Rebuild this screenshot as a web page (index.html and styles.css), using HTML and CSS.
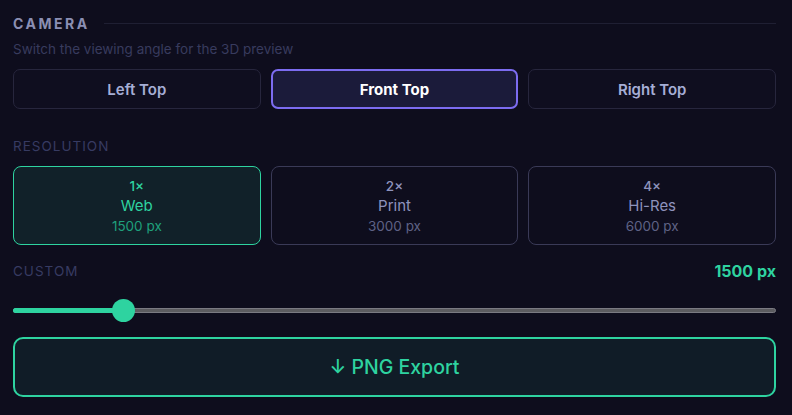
FILE: index.html
```html
<!DOCTYPE html>
<html>
<head>
<meta charset="utf-8">
<link rel="stylesheet" href="styles.css">
</head>
<body>
<div class="panel">
  <div class="section-head">
    <span class="title">CAMERA</span>
    <span class="rule"></span>
  </div>
  <div class="subtitle">Switch the viewing angle for the 3D preview</div>
  <div class="cam-row">
    <button class="cam">Left Top</button>
    <button class="cam active">Front Top</button>
    <button class="cam">Right Top</button>
  </div>

  <div class="label res-label">RESOLUTION</div>
  <div class="res-row">
    <div class="res active">
      <div class="mult">1×</div>
      <div class="name">Web</div>
      <div class="px">1500 px</div>
    </div>
    <div class="res">
      <div class="mult">2×</div>
      <div class="name">Print</div>
      <div class="px">3000 px</div>
    </div>
    <div class="res">
      <div class="mult">4×</div>
      <div class="name">Hi-Res</div>
      <div class="px">6000 px</div>
    </div>
  </div>

  <div class="custom-head">
    <span class="label">CUSTOM</span>
    <span class="value">1500 px</span>
  </div>
  <div class="slider">
    <div class="track">
      <div class="fill" style="width: 14.4%"></div>
      <div class="thumb" style="left: 14.4%"></div>
    </div>
  </div>

  <button class="export">↓ PNG Export</button>
</div>
</body>
</html>
```

FILE: styles.css
```css
* { box-sizing: border-box; }
html, body {
  margin: 0;
  padding: 0;
  background: #0e0d1d;
  font-family: Inter, "Noto Sans", sans-serif;
}
.panel {
  width: 792px;
  height: 415px;
  padding: 12px 16px 0 13px;
  display: flex;
  flex-direction: column;
}
.section-head {
  display: flex;
  align-items: center;
  gap: 14px;
  height: 22px;
}
.title {
  font-size: 14px;
  font-weight: 700;
  letter-spacing: 2.5px;
  color: #8b8fb3;
}
.rule {
  flex: 1;
  height: 1px;
  background: #1f1f33;
}
.subtitle {
  margin-top: 6px;
  font-size: 13.5px;
  color: #383b5e;
  line-height: 18px;
}
.cam-row {
  margin-top: 11px;
  display: grid;
  grid-template-columns: 1fr 1fr 1fr;
  gap: 10px;
}
.cam {
  height: 40px;
  border-radius: 7px;
  border: 1.5px solid #27263d;
  background: #0f0e1f;
  color: #a6aed6;
  font-family: Inter, "Noto Sans", sans-serif;
  font-size: 15px;
  font-weight: 600;
  padding: 0;
}
.cam.active {
  border: 2px solid #7c6cf0;
  background: #1b1b3a;
  color: #ffffff;
  font-weight: 700;
}
.label {
  font-size: 13.5px;
  letter-spacing: 1px;
  color: #373b62;
}
.res-label {
  margin-top: 29px;
  line-height: 16px;
}
.res-row {
  margin-top: 12px;
  display: grid;
  grid-template-columns: 1fr 1fr 1fr;
  gap: 10px;
}
.res {
  height: 79px;
  border-radius: 8px;
  border: 1px solid #3a3a57;
  display: flex;
  flex-direction: column;
  align-items: center;
  justify-content: center;
  padding-top: 2px;
}
.res .mult {
  font-size: 13.5px;
  font-weight: 500;
  color: #8e93bd;
  line-height: 20px;
}
.res .name {
  font-size: 15px;
  color: #8e93bd;
  line-height: 20px;
}
.res .px {
  font-size: 13.5px;
  color: #5f6285;
  line-height: 21px;
}
.res.active {
  border-color: #2ed3a0;
  background: #112129;
}
.res.active .mult, .res.active .name { color: #2ed3a0; }
.res.active .px { color: #1fa07c; }
.custom-head {
  margin-top: 18px;
  display: flex;
  justify-content: space-between;
  align-items: center;
  line-height: 16px;
}
.value {
  font-size: 16px;
  font-weight: 700;
  color: #2ed3a0;
}
.slider {
  margin-top: 19px;
  height: 24px;
  display: flex;
  align-items: center;
}
.track {
  position: relative;
  width: 100%;
  height: 5px;
  border-radius: 3px;
  background: #5c5c60;
  border: 1px solid #7a7a82;
}
.fill {
  position: absolute;
  left: -1px;
  top: -1px;
  bottom: -1px;
  background: #2ed3a0;
  border-radius: 3px 0 0 3px;
}
.thumb {
  position: absolute;
  top: 50%;
  width: 23px;
  height: 23px;
  margin-left: -11.5px;
  margin-top: -11.5px;
  border-radius: 50%;
  background: #2ed3a0;
}
.export {
  margin-top: 15px;
  height: 60px;
  width: 100%;
  border-radius: 10px;
  border: 2px solid #2ed3a0;
  background: #101c27;
  color: #2ed3a0;
  font-family: Inter, "Noto Sans", sans-serif;
  font-size: 19.5px;
  font-weight: 500;
  padding: 0;
}
```
